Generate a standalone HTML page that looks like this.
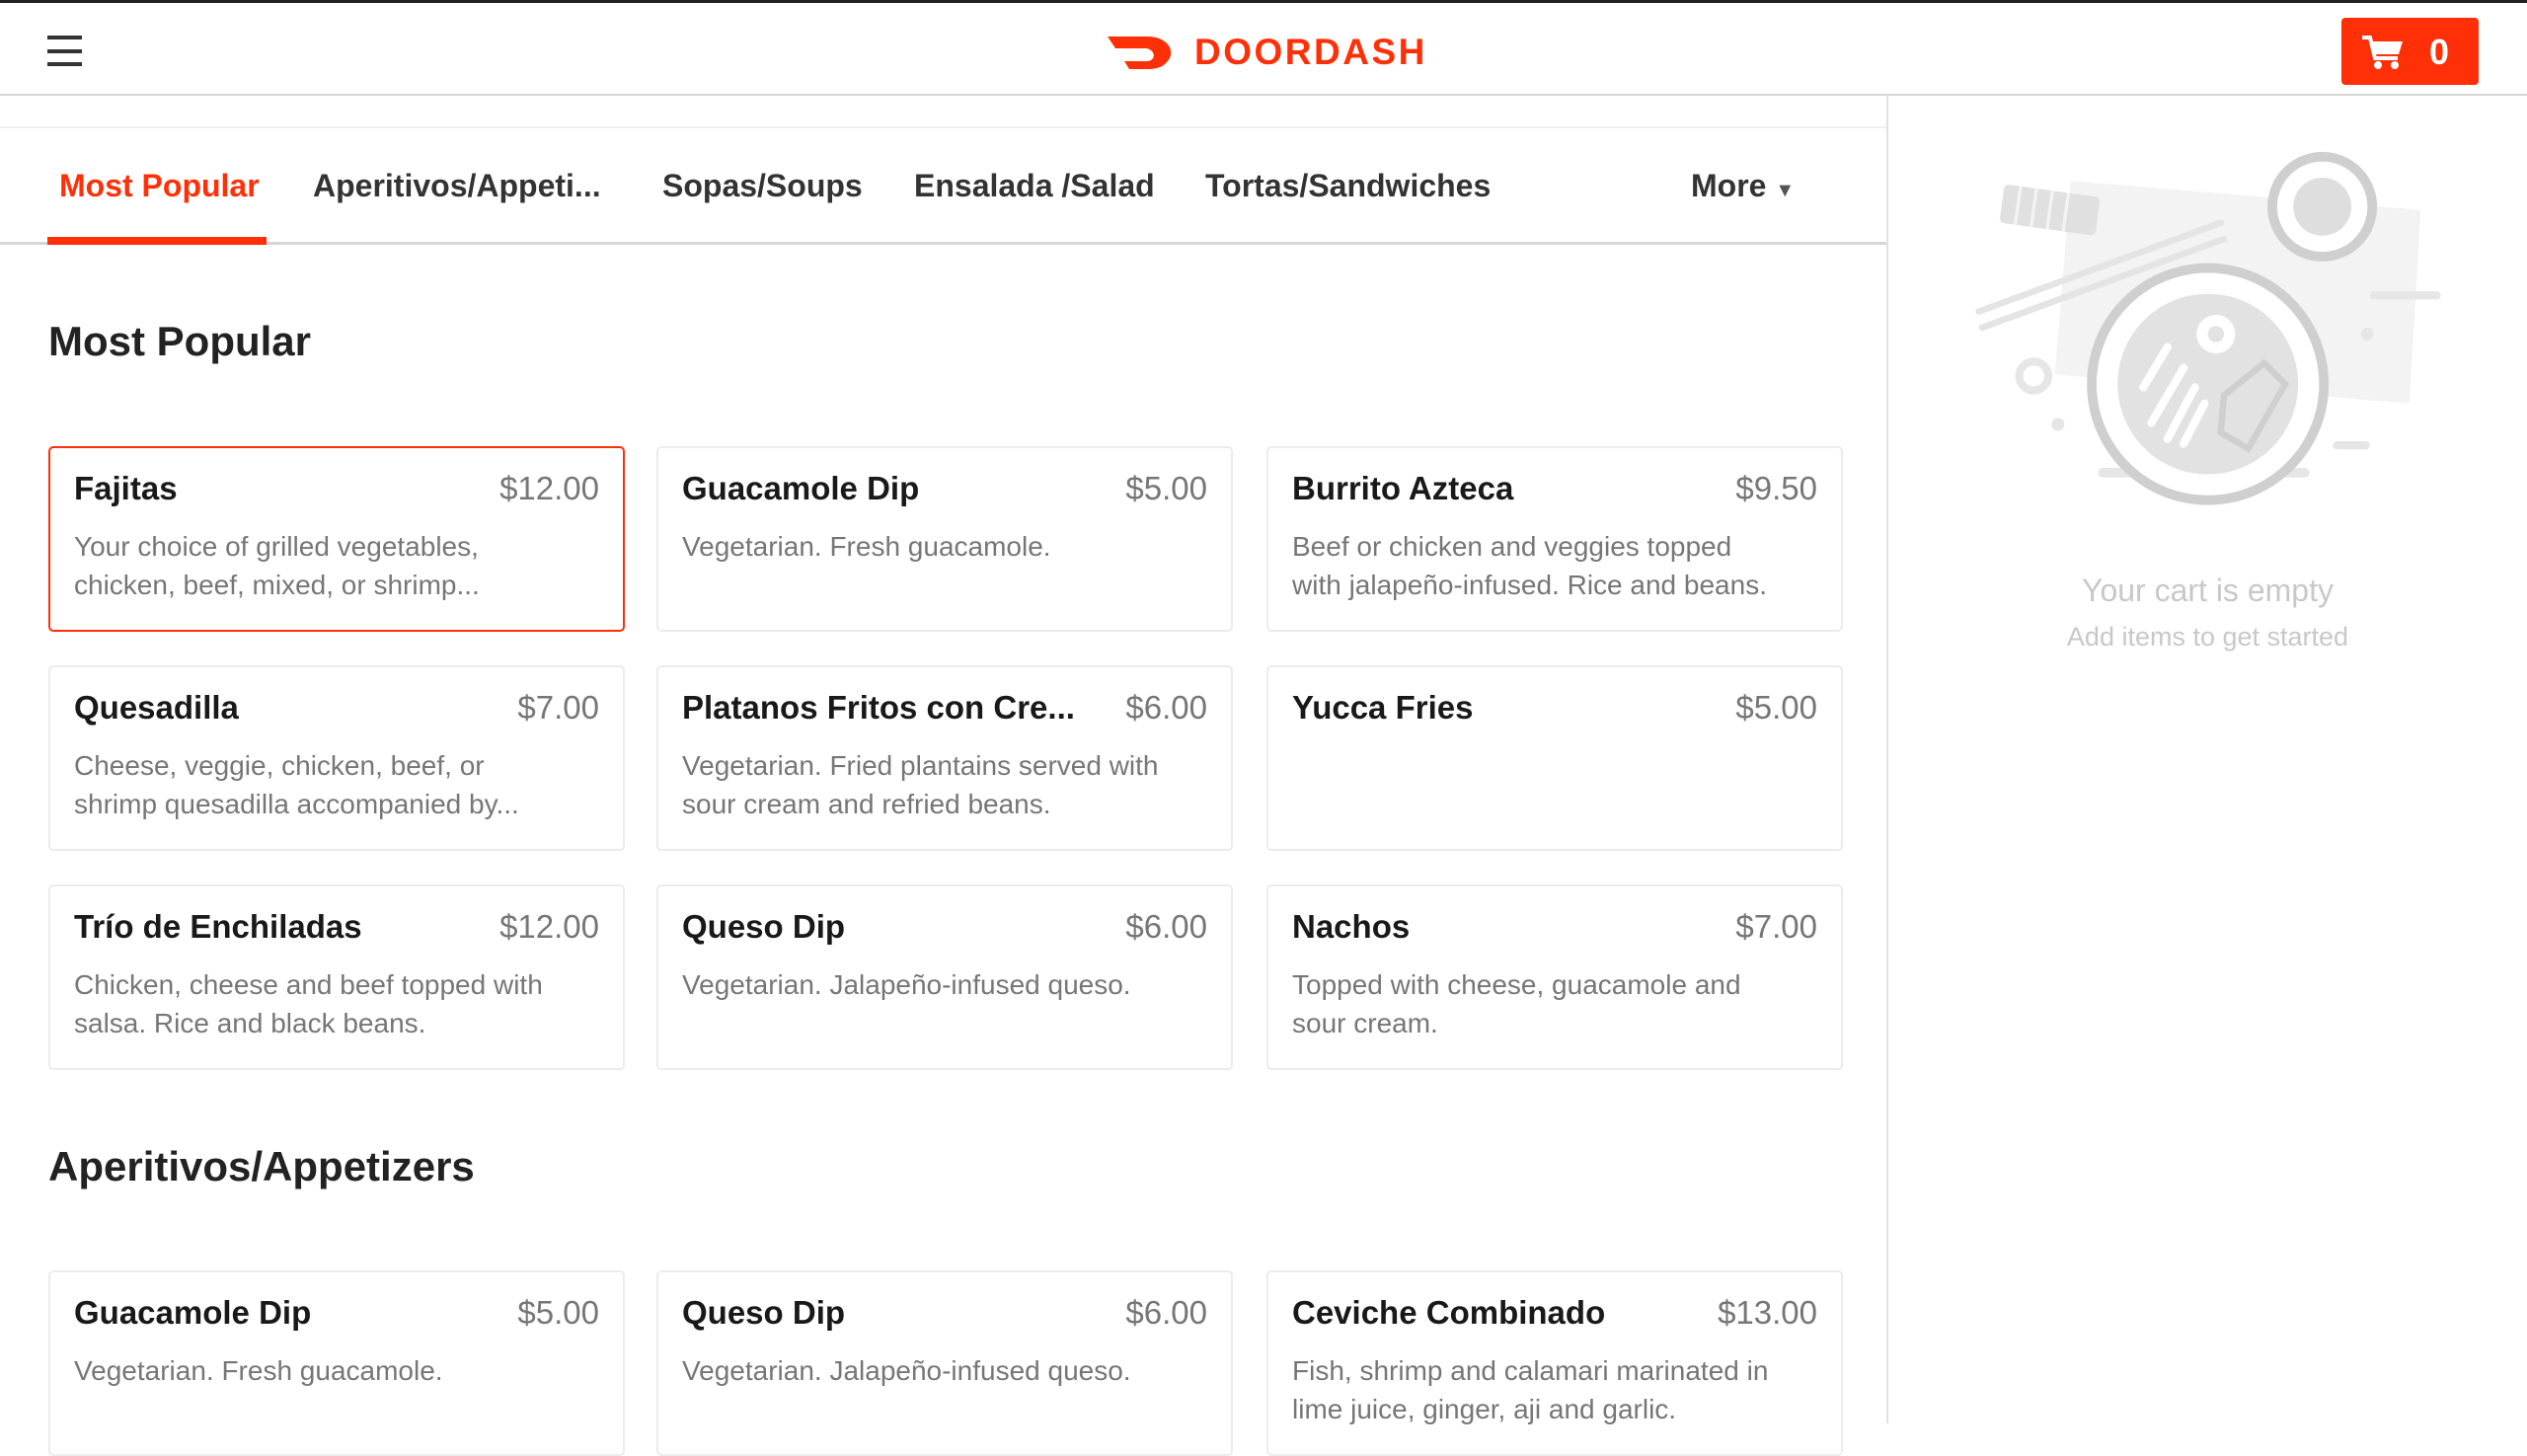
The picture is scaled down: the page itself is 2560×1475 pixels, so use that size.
<!DOCTYPE html>
<html><head><meta charset="utf-8"><style>
*{box-sizing:border-box;margin:0;padding:0}
body{width:2560px;height:1442px;overflow:hidden;background:#fff;font-family:"Liberation Sans",sans-serif;color:#191919;position:relative}
.topline{position:absolute;left:0;top:0;width:2560px;height:3px;background:#222}
.header{position:absolute;left:0;top:3px;width:2560px;height:94px;border-bottom:2px solid #d6d6d6}
.ham{position:absolute;left:48px;top:33px;width:35px;height:31px}
.ham i{display:block;height:4px;background:#333;margin-bottom:9.5px}
.logo{position:absolute;left:1122px;top:29px;display:flex;align-items:center}
.logo span{color:#ff3008;font-weight:bold;font-size:37px;letter-spacing:2.5px;margin-left:22px}
.cart{position:absolute;left:2372px;top:15px;width:139px;height:68px;background:#ff3008;border-radius:4px;color:#fff;font-weight:bold;font-size:36px}
.side{position:absolute;left:1911px;top:97px;width:2px;height:1345px;background:#e2e2e2}
.subline{position:absolute;left:0;top:128px;width:1911px;height:2px;background:#f0f0f0}
.tabs{position:absolute;left:0;top:130px;width:1911px;height:118px;border-bottom:3px solid #d6d6d6}
.tab{position:absolute;top:40px;font-size:32px;font-weight:bold;color:#333;white-space:nowrap}
.uline{position:absolute;left:48px;top:240px;width:222px;height:8px;background:#ff3008}
h2{position:absolute;left:49px;font-size:42px;font-weight:bold;color:#222}
.card{position:absolute;width:584px;height:188px;border:2px solid #ececec;border-radius:5px;padding:0 24px}
.card.sel{border-color:#ff3008}
.t{position:absolute;left:24px;top:22px;font-size:33px;font-weight:bold;color:#191919;white-space:nowrap}
.p{position:absolute;right:24px;top:22px;font-size:33px;color:#767676}
.d{position:absolute;left:24px;top:80px;width:490px;font-size:28px;line-height:39px;color:#767676}
.empty{position:absolute;left:1913px;width:647px;text-align:center;color:#c8c8c8}
</style></head><body>
<div class="topline"></div>
<div class="header">
 <div class="ham"><i></i><i></i><i></i></div>
 <div class="logo"><svg width="66" height="36" viewBox="0 0 66 36"><path d="M0 2 H40 C62 2 70 18 60 28 C55 34 48 35 40 35 H22 L17 27 H40 C48 27 50 17 40 14 H8 Z" fill="#ff3008"/></svg><span>DOORDASH</span></div>
 <div class="cart">
  <svg style="position:absolute;left:21px;top:17px" width="42" height="36" viewBox="0 0 42 36"><path d="M0 3 H8 L13 24 H36" stroke="#fff" stroke-width="4" fill="none"/><path d="M9 7 H41 L37 20 H12 Z" fill="#fff"/><circle cx="16" cy="31" r="4" fill="#fff"/><circle cx="33" cy="31" r="4" fill="#fff"/></svg>
  <span style="position:absolute;left:89px;top:14px">0</span>
 </div>
</div>
<div class="side"></div>
<div class="subline"></div>
<div class="tabs">
 <div class="tab" style="left:60px;color:#ff3008">Most Popular</div>
 <div class="tab" style="left:317px">Aperitivos/Appeti...</div>
 <div class="tab" style="left:671px">Sopas/Soups</div>
 <div class="tab" style="left:926px">Ensalada /Salad</div>
 <div class="tab" style="left:1221px">Tortas/Sandwiches</div>
 <div class="tab" style="left:1713px">More <span style="font-size:20px;color:#555">▼</span></div>
</div>
<div class="uline"></div>

<h2 style="top:322px">Most Popular</h2>
<div class="card sel" style="left:49px;top:452px"><div class="t">Fajitas</div><div class="p">$12.00</div><div class="d">Your choice of grilled vegetables, chicken, beef, mixed, or shrimp...</div></div>
<div class="card" style="left:665px;top:452px"><div class="t">Guacamole Dip</div><div class="p">$5.00</div><div class="d">Vegetarian. Fresh guacamole.</div></div>
<div class="card" style="left:1283px;top:452px"><div class="t">Burrito Azteca</div><div class="p">$9.50</div><div class="d">Beef or chicken and veggies topped with jalapeño-infused. Rice and beans.</div></div>
<div class="card" style="left:49px;top:674px"><div class="t">Quesadilla</div><div class="p">$7.00</div><div class="d">Cheese, veggie, chicken, beef, or shrimp quesadilla accompanied by...</div></div>
<div class="card" style="left:665px;top:674px"><div class="t">Platanos Fritos con Cre...</div><div class="p">$6.00</div><div class="d">Vegetarian. Fried plantains served with sour cream and refried beans.</div></div>
<div class="card" style="left:1283px;top:674px"><div class="t">Yucca Fries</div><div class="p">$5.00</div></div>
<div class="card" style="left:49px;top:896px"><div class="t">Trío de Enchiladas</div><div class="p">$12.00</div><div class="d">Chicken, cheese and beef topped with salsa. Rice and black beans.</div></div>
<div class="card" style="left:665px;top:896px"><div class="t">Queso Dip</div><div class="p">$6.00</div><div class="d">Vegetarian. Jalapeño-infused queso.</div></div>
<div class="card" style="left:1283px;top:896px"><div class="t">Nachos</div><div class="p">$7.00</div><div class="d">Topped with cheese, guacamole and sour cream.</div></div>

<h2 style="top:1158px">Aperitivos/Appetizers</h2>
<div class="card" style="left:49px;top:1287px"><div class="t">Guacamole Dip</div><div class="p">$5.00</div><div class="d">Vegetarian. Fresh guacamole.</div></div>
<div class="card" style="left:665px;top:1287px"><div class="t">Queso Dip</div><div class="p">$6.00</div><div class="d">Vegetarian. Jalapeño-infused queso.</div></div>
<div class="card" style="left:1283px;top:1287px"><div class="t">Ceviche Combinado</div><div class="p">$13.00</div><div class="d">Fish, shrimp and calamari marinated in lime juice, ginger, aji and garlic.</div></div>

<svg style="position:absolute;left:1959px;top:131px" width="539" height="392" viewBox="1200 80 330 240">
 <path d="M1285 112 L1502 130 L1495 250 L1275 232 Z" fill="#f3f3f3"/>
 <g transform="rotate(8 1272 130)"><rect x="1242" y="118" width="60" height="24" rx="3" fill="#e0e0e0"/><g stroke="#f3f3f3" stroke-width="2"><line x1="1252" y1="118" x2="1252" y2="142"/><line x1="1262" y1="118" x2="1262" y2="142"/><line x1="1272" y1="118" x2="1272" y2="142"/><line x1="1282" y1="118" x2="1282" y2="142"/></g></g>
 <line x1="1228" y1="193" x2="1378" y2="138" stroke="#e4e4e4" stroke-width="4" stroke-linecap="round"/>
 <line x1="1230" y1="203" x2="1380" y2="148" stroke="#e4e4e4" stroke-width="4" stroke-linecap="round"/>
 <circle cx="1441" cy="128" r="31" fill="#fff" stroke="#cfcfcf" stroke-width="6"/>
 <circle cx="1441" cy="128" r="18" fill="#dedede"/>
 <circle cx="1262" cy="233" r="9" fill="none" stroke="#e6e6e6" stroke-width="5"/>
 <circle cx="1277" cy="263" r="4" fill="#e6e6e6"/><circle cx="1469" cy="207" r="4" fill="#e6e6e6"/>
 <line x1="1473" y1="183" x2="1512" y2="183" stroke="#e6e6e6" stroke-width="5" stroke-linecap="round"/>
 <line x1="1450" y1="276" x2="1468" y2="276" stroke="#e6e6e6" stroke-width="5" stroke-linecap="round"/>
 <line x1="1305" y1="293" x2="1430" y2="293" stroke="#e6e6e6" stroke-width="6" stroke-linecap="round"/>
 <circle cx="1370" cy="238" r="72" fill="#fff" stroke="#cfcfcf" stroke-width="6"/>
 <circle cx="1370" cy="238" r="56" fill="#e2e2e2"/>
 <circle cx="1375" cy="207" r="12" fill="#fff"/><circle cx="1375" cy="207" r="5" fill="#e2e2e2"/>
 <g stroke="#fff" stroke-width="5" stroke-linecap="round"><line x1="1345" y1="215" x2="1330" y2="240"/><line x1="1355" y1="228" x2="1335" y2="262"/><line x1="1362" y1="240" x2="1345" y2="272"/><line x1="1368" y1="250" x2="1355" y2="275"/></g>
 <path d="M1380 245 L1405 225 L1418 238 L1395 278 L1378 268 Z" fill="none" stroke="#cfcfcf" stroke-width="4"/>
</svg>
<div class="empty" style="top:580px;font-size:32px">Your cart is empty</div>
<div class="empty" style="top:630px;font-size:27px">Add items to get started</div>
</body></html>
